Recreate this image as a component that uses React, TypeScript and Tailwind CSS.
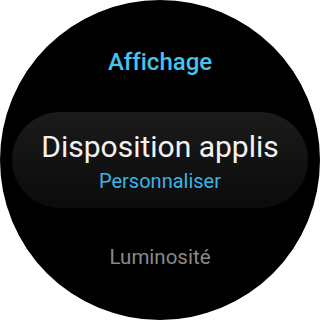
export default function App() {
  return (
    <div className="w-[320px] h-[320px] bg-white">
      <div
        className="w-[320px] h-[320px] rounded-full bg-black flex flex-col items-center overflow-hidden [font-variant-ligatures:none]"
        style={{ fontFamily: "Roboto, 'Noto Sans', sans-serif" }}
      >
        <div className="mt-[50px] h-[24px] text-[24px] leading-none font-medium text-[#47c3f2]">
          Affichage
        </div>
        <div className="mt-[38px] w-[296px] h-[96px] rounded-[48px] bg-gradient-to-b from-[#1b1b1b] to-[#0b0b0b] flex flex-col items-center">
          <div className="mt-[20px] h-[30px] text-[30px] leading-none text-[#f2f2f2]">
            Disposition applis
          </div>
          <div className="mt-[9px] h-[20px] text-[20px] leading-none text-[#3bb4e6]">
            Personnaliser
          </div>
        </div>
        <div className="mt-[39px] h-[21px] text-[20.5px] leading-none text-[#8a8a8a]">
          Luminosité
        </div>
      </div>
    </div>
  );
}
